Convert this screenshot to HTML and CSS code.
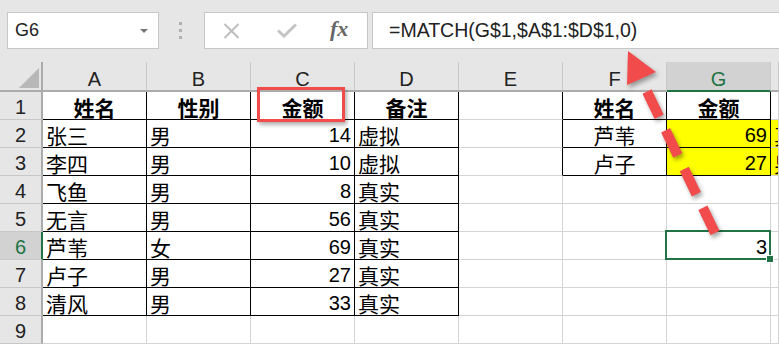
FILE: index.html
```html
<!DOCTYPE html>
<html lang="zh-CN">
<head>
    <meta charset="UTF-8">
    <title>MATCH</title>
    <link rel="stylesheet" href="styles.css">
</head>
<body>
    <div class="page">
        <div class="toolbar">
            <div class="namebox"><span>G6</span><span class="caret"></span></div>
            <div class="grip"><i></i><i></i><i></i></div>
            <div class="fnbox">
                <svg class="ico-x" width="17" height="16" viewBox="0 0 17 16"><path d="M1.5 1 L15.5 15 M15.5 1 L1.5 15"/></svg>
                <svg class="ico-ok" width="20" height="15" viewBox="0 0 20 15"><path d="M1 7.5 L7 13 L19 1.5"/></svg>
                <span class="fx">fx</span>
            </div>
            <div class="formula">=MATCH(G$1,$A$1:$D$1,0)</div>
        </div>

        <div class="sheet">
            <!-- column headers -->
            <div class="c col corner"></div>
            <div class="c col">A</div>
            <div class="c col">B</div>
            <div class="c col">C</div>
            <div class="c col">D</div>
            <div class="c col">E</div>
            <div class="c col">F</div>
            <div class="c col on">G</div>
            <div class="c col"></div>

            <!-- 1 -->
            <div class="c row">1</div>
            <div class="c hd bk">姓名</div>
            <div class="c hd bk">性别</div>
            <div class="c hd bk">金额</div>
            <div class="c hd bk">备注</div>
            <div class="c bkr"></div>
            <div class="c hd bk">姓名</div>
            <div class="c hd bk">金额</div>
            <div class="c"></div>

            <!-- 2 -->
            <div class="c row">2</div>
            <div class="c bk">张三</div>
            <div class="c bk">男</div>
            <div class="c num bk">14</div>
            <div class="c bk">虚拟</div>
            <div class="c bkr"></div>
            <div class="c mid bk">芦苇</div>
            <div class="c num bk yel">69</div>
            <div class="c yel">真实</div>

            <!-- 3 -->
            <div class="c row">3</div>
            <div class="c bk">李四</div>
            <div class="c bk">男</div>
            <div class="c num bk">10</div>
            <div class="c bk">虚拟</div>
            <div class="c bkr"></div>
            <div class="c mid bk">卢子</div>
            <div class="c num bk yel">27</div>
            <div class="c yel">男</div>

            <!-- 4 -->
            <div class="c row">4</div>
            <div class="c bk">飞鱼</div>
            <div class="c bk">男</div>
            <div class="c num bk">8</div>
            <div class="c bk">真实</div>
            <div class="c"></div>
            <div class="c"></div>
            <div class="c"></div>
            <div class="c"></div>

            <!-- 5 -->
            <div class="c row">5</div>
            <div class="c bk">无言</div>
            <div class="c bk">男</div>
            <div class="c num bk">56</div>
            <div class="c bk">真实</div>
            <div class="c"></div>
            <div class="c"></div>
            <div class="c"></div>
            <div class="c"></div>

            <!-- 6 -->
            <div class="c row on">6</div>
            <div class="c bk">芦苇</div>
            <div class="c bk">女</div>
            <div class="c num bk">69</div>
            <div class="c bk">真实</div>
            <div class="c"></div>
            <div class="c"></div>
            <div class="c num active">3</div>
            <div class="c"></div>

            <!-- 7 -->
            <div class="c row">7</div>
            <div class="c bk">卢子</div>
            <div class="c bk">男</div>
            <div class="c num bk">27</div>
            <div class="c bk">真实</div>
            <div class="c"></div>
            <div class="c"></div>
            <div class="c"></div>
            <div class="c"></div>

            <!-- 8 -->
            <div class="c row">8</div>
            <div class="c bk">清风</div>
            <div class="c bk">男</div>
            <div class="c num bk">33</div>
            <div class="c bk">真实</div>
            <div class="c"></div>
            <div class="c"></div>
            <div class="c"></div>
            <div class="c"></div>

            <!-- 9 -->
            <div class="c row">9</div>
            <div class="c"></div>
            <div class="c"></div>
            <div class="c"></div>
            <div class="c"></div>
            <div class="c"></div>
            <div class="c"></div>
            <div class="c"></div>
            <div class="c"></div>
        </div>

        <!-- annotations drawn over the sheet -->
        <div class="callout"></div>
        <svg class="arrow" width="779" height="346" viewBox="0 0 779 346">
            <g class="arrow-g">
                <line x1="715" y1="233" x2="641" y2="79"/>
                <polygon points="628,51 656,72 627,85"/>
            </g>
        </svg>
    </div>
</body>
</html>
```

FILE: styles.css
```css
body {
    margin: 0;
    background: #fff;
    font-family: "Liberation Sans", "Noto Sans CJK SC", sans-serif;
}

.page {
    position: relative;
    width: 779px;
    height: 346px;
    overflow: hidden;
}

/* formula bar */
.toolbar {
    height: 62px;
    box-sizing: border-box;
    padding: 12px 0 0 7px;
    background: #e6e6e6;
    display: flex;
    align-items: flex-start;
}

.namebox {
    width: 152px;
    height: 37px;
    box-sizing: border-box;
    background: #fff;
    border: 1px solid #c6c6c6;
    display: flex;
    align-items: center;
    justify-content: space-between;
    padding: 0 10px 0 7px;
    font-size: 18px;
    color: #222;
}

.caret {
    width: 0;
    height: 0;
    border-left: 4px solid transparent;
    border-right: 4px solid transparent;
    border-top: 4px solid #777;
}

.grip {
    margin: 10px 0 0 20px;
    display: flex;
    flex-direction: column;
    gap: 4px;
}

.grip i {
    display: block;
    width: 3px;
    height: 3px;
    background: #b0b0b0;
}

.fnbox {
    margin-left: 22px;
    width: 164px;
    height: 37px;
    box-sizing: border-box;
    background: #fff;
    border: 1px solid #c6c6c6;
    display: flex;
    align-items: center;
    padding-left: 18px;
}

.ico-x path {
    fill: none;
    stroke: #bdbdbd;
    stroke-width: 2;
}

.ico-ok {
    margin-left: 37px;
}

.ico-ok path {
    fill: none;
    stroke: #c4c4c4;
    stroke-width: 3;
}

.fx {
    margin-left: 33px;
    margin-top: -3px;
    font-family: "Liberation Serif", serif;
    font-style: italic;
    font-weight: bold;
    font-size: 22px;
    color: #666;
}

.formula {
    margin-left: 4px;
    flex: 1;
    height: 37px;
    box-sizing: border-box;
    background: #fff;
    border: 1px solid #c6c6c6;
    border-right: none;
    padding-left: 16px;
    font-size: 19.5px;
    line-height: 35px;
    color: #222;
}

/* grid */
.sheet {
    display: grid;
    grid-template-columns: 43px repeat(7, 104px) 1fr;
    grid-template-rows: 30px repeat(9, 28px);
}

.c {
    box-sizing: border-box;
    border-right: 1px solid #d4d4d4;
    border-bottom: 1px solid #d4d4d4;
    display: flex;
    align-items: center;
    padding: 3px 3px 0;
    font-size: 21px;
    color: #000;
    white-space: nowrap;
    overflow: hidden;
}

.col {
    background: #e6e6e6;
    border-right-color: #c8c8c8;
    border-bottom: 2px solid #ababab;
    justify-content: center;
    font-size: 20px;
    color: #222;
    padding-top: 6px;
}

.row {
    background: #e6e6e6;
    border-right: 2px solid #ababab;
    border-bottom-color: #c8c8c8;
    justify-content: center;
    font-size: 20px;
    color: #222;
}

.col.on {
    background: #d2d2d2;
    color: #217346;
    border-bottom-color: #217346;
}

.row.on {
    background: #d2d2d2;
    color: #217346;
    border-right-color: #217346;
}

.corner {
    position: relative;
    border-right: 2px solid #ababab;
}

.corner::after {
    content: "";
    position: absolute;
    right: 2px;
    bottom: 2px;
    width: 0;
    height: 0;
    border-left: 20px solid transparent;
    border-bottom: 20px solid #b8b8b8;
}

.hd {
    font-weight: bold;
    justify-content: center;
}

.mid {
    justify-content: center;
}

.num {
    justify-content: flex-end;
    font-size: 20px;
}

.bk {
    border-right-color: #000;
    border-bottom-color: #000;
}

.bkr {
    border-right-color: #000;
}

.yel {
    background: #ffff00;
}

.active {
    position: relative;
    overflow: visible;
}

.active::before {
    content: "";
    position: absolute;
    left: -2px;
    top: -2px;
    right: -1px;
    bottom: -1px;
    border: 2px solid #217346;
}

.active::after {
    content: "";
    position: absolute;
    right: -4px;
    bottom: -4px;
    width: 6px;
    height: 6px;
    background: #217346;
    border: 1px solid #fff;
}

/* annotations */
.callout {
    position: absolute;
    left: 257px;
    top: 87px;
    width: 88px;
    height: 35px;
    box-sizing: border-box;
    border: 3px solid #f24b4b;
    box-shadow: 2px 3px 4px rgba(0, 0, 0, 0.3);
}

.arrow {
    position: absolute;
    left: 0;
    top: 0;
    pointer-events: none;
}

.arrow-g {
    filter: drop-shadow(2px 3px 2px rgba(0, 0, 0, 0.35));
}

.arrow-g line {
    stroke: #f24b4b;
    stroke-width: 10;
    stroke-dasharray: 28 15;
}

.arrow-g polygon {
    fill: #f24b4b;
}
```
